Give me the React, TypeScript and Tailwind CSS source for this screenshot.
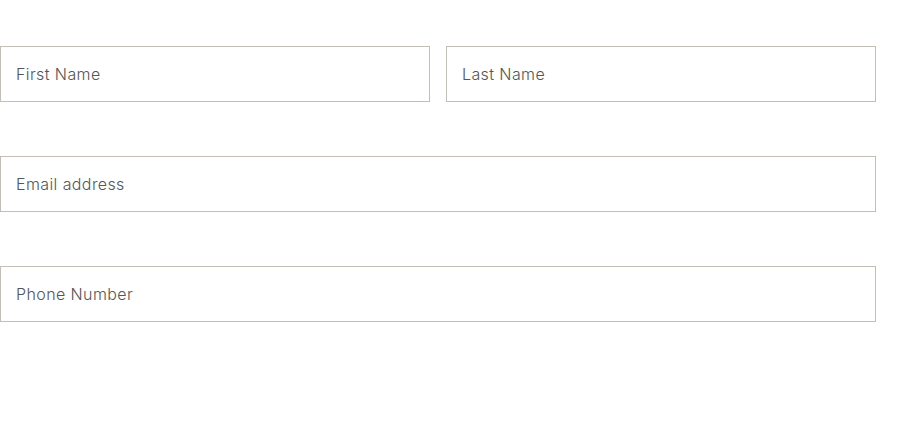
const fields = [
  { id: "first", label: "First Name" },
  { id: "last", label: "Last Name" },
];

const Field = ({ label }: { label: string }) => (
  <input
    type="text"
    placeholder={label}
    className="h-[56px] w-full border border-[#c2beb6] bg-white px-[15px] text-[16px] tracking-[0.4px] text-[#555] placeholder:text-[#555] outline-none font-['Inter',sans-serif] font-light"
  />
);

const App = () => {
  return (
    <div className="w-[900px] h-[428px] bg-white">
      <form className="w-[876px] pt-[46px] flex flex-col gap-[54px]">
        {/* name row */}
        <div className="grid grid-cols-2 gap-4">
          {fields.map((f) => (
            <Field key={f.id} label={f.label} />
          ))}
        </div>
        <Field label="Email address" />
        <Field label="Phone Number" />
      </form>
    </div>
  );
};

export default App;
